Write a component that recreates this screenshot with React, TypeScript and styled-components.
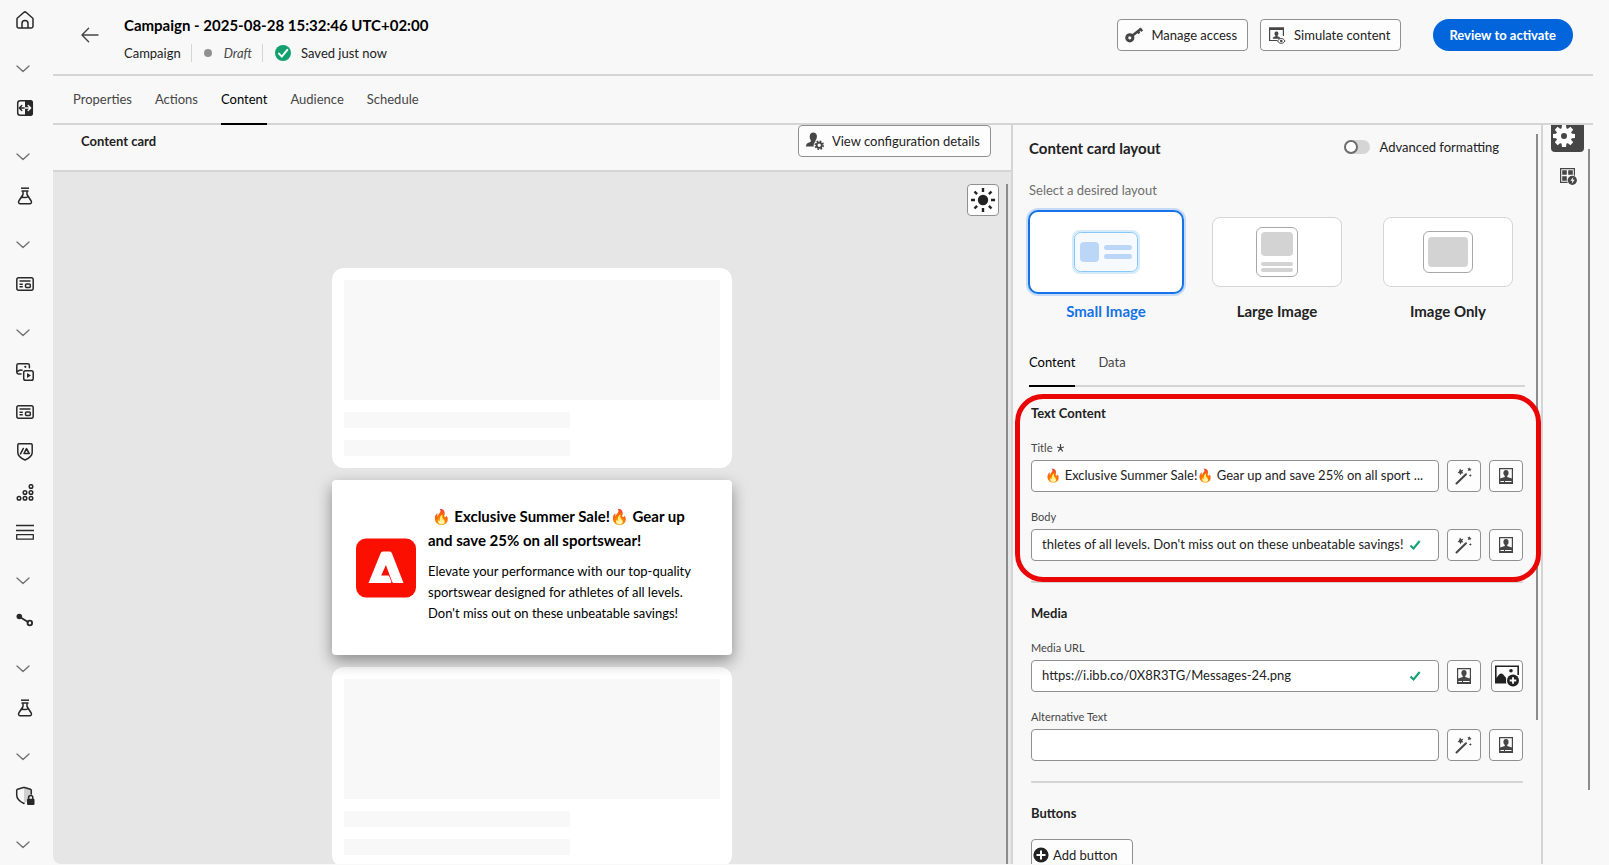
import React from 'react';
import styled, { createGlobalStyle, css } from 'styled-components';

const GlobalStyle = createGlobalStyle`
  *, *::before, *::after { box-sizing: border-box; }
  body { margin: 0; background: #f8f8f8; }
  body, button, input { font-family: Lato, "Noto Sans", sans-serif; font-size: 13px; color: #222222; }
  h1, h2, h3, p { margin: 0; }
  svg { display: block; flex: none; }
`;

const Shell = styled.div`
  display: flex;
  height: 100vh;
  min-height: 600px;
  padding-bottom: 1px;
  overflow: hidden;
`;

/* ---------- left navigation ---------- */

const SideNav = styled.nav`
  flex: none;
  width: 53px;
  display: flex;
  flex-direction: column;
  align-items: flex-start;
`;

const NavLink = styled.a`
  flex: none;
  display: flex;
  align-items: center;
  justify-content: center;
  width: 50px;
  height: 40px;
  color: #292929;
`;

const NavToggle = styled.button`
  flex: none;
  display: flex;
  align-items: center;
  justify-content: center;
  width: 46px;
  height: 48px;
  padding: 10px 0 0;
  border: 0;
  background: none;
  color: #6e6e6e;
`;

/* ---------- page frame ---------- */

const Main = styled.main`
  flex: 1;
  min-width: 0;
  display: flex;
  flex-direction: column;
  margin-right: 16px;
`;

const Header = styled.header`
  flex: none;
  display: flex;
  align-items: center;
  height: 76px;
  padding: 0 20px 4px 28px;
  border-bottom: 2px solid #d5d5d5;
`;

const BackButton = styled.button`
  display: flex;
  padding: 0;
  border: 0;
  background: none;
  color: #464646;
`;

const Heading = styled.div`
  flex: 1;
  margin-left: 25px;
  padding-top: 7px;
`;

const PageTitle = styled.h1`
  font-size: 15px;
  line-height: 20px;
  color: #000000;
`;

const StatusRow = styled.div`
  display: flex;
  align-items: center;
  height: 18px;
  margin-top: 9px;
`;

const StatusPart = styled.span`
  display: flex;
  align-items: center;
  gap: 10px;
  height: 18px;

  & + & {
    margin-left: 10px;
    padding-left: 12px;
    border-left: 1px solid #d5d5d5;
  }
`;

const StatusDot = styled.span`
  width: 8px;
  height: 8px;
  margin-right: 2px;
  border-radius: 50%;
  background: #909090;
`;

const DraftText = styled.em`
  color: #464646;
`;

const OutlineButton = styled.button<{ $tight?: boolean }>`
  display: flex;
  align-items: center;
  gap: ${(p) => (p.$tight ? 4 : 8)}px;
  height: 32px;
  padding: ${(p) => (p.$tight ? '0 14px 0 1px' : '0 10px 0 7px')};
  border: 1px solid #909090;
  border-radius: 4px;
  background: #fdfdfd;
  white-space: nowrap;
`;

const HeaderActions = styled.div`
  display: flex;
  gap: 12px;
`;

const PrimaryButton = styled.button`
  height: 32px;
  margin-left: 20px;
  padding: 0 17px 0 16px;
  border: 0;
  border-radius: 16px;
  background: #0265dc;
  color: #ffffff;
  font-weight: 700;
`;

const TabBar = styled.div<{ $inner?: boolean }>`
  flex: none;
  display: flex;
  gap: 23px;
  height: ${(p) => (p.$inner ? 51 : 49)}px;
  padding: ${(p) => (p.$inner ? '0' : '0 20px')};
  border-bottom: 2px solid #d5d5d5;
`;

const Tab = styled.button<{ $active?: boolean; $inner?: boolean }>`
  height: 100%;
  padding: ${(p) => (p.$inner ? '2px 0 0' : '0 0 2px')};
  border: 0;
  background: none;
  color: #464646;
  ${(p) =>
    p.$active &&
    css`
      color: #000000;
      box-shadow: 0 2px 0 #000000;
    `}
`;

const Workspace = styled.div`
  flex: 1;
  min-height: 0;
  display: flex;
`;

/* ---------- preview ---------- */

const Preview = styled.section`
  flex: 1;
  min-width: 0;
  display: flex;
  flex-direction: column;
  border-right: 2px solid #d5d5d5;
`;

const PreviewHeader = styled.div`
  flex: none;
  display: flex;
  align-items: flex-start;
  justify-content: space-between;
  height: 47px;
  padding: 0 20px 0 28px;
  border-bottom: 2px solid #d5d5d5;
`;

const PreviewTitle = styled.h2`
  font-size: 13px;
  line-height: 32px;
`;

const Canvas = styled.div`
  flex: 1;
  min-height: 0;
  position: relative;
  overflow: hidden;
  padding-top: 96px;
  background: #e6e6e6;
  border-bottom-left-radius: 8px;
`;

const ThemeButton = styled.button`
  position: absolute;
  top: 12px;
  right: 12px;
  display: flex;
  align-items: center;
  justify-content: center;
  width: 32px;
  height: 32px;
  padding: 0;
  border: 1px solid #909090;
  border-radius: 4px;
  background: #fdfdfd;
`;

const ScrollThumb = styled.div<{ $top: number; $right: number; $bottom: number }>`
  position: absolute;
  top: ${(p) => p.$top}px;
  right: ${(p) => p.$right}px;
  bottom: ${(p) => p.$bottom}px;
  width: 2px;
  background: #8c8c8c;
`;

const CardStack = styled.div`
  display: flex;
  flex-direction: column;
  gap: 12px;
  width: 400px;
  margin: 0 auto;
`;

const SkeletonCard = styled.div`
  display: flex;
  flex-direction: column;
  gap: 12px;
  padding: 12px;
  border-radius: 12px;
  background: #ffffff;
`;

const SkeletonImage = styled.div`
  height: 120px;
  background: #f8f8f8;
`;

const SkeletonLine = styled.div`
  width: 60%;
  height: 16px;
  background: #f8f8f8;
`;

const LiveCard = styled.article`
  position: relative;
  display: flex;
  align-items: center;
  gap: 12px;
  padding: 24px;
  border-radius: 4px;
  background: #ffffff;
  box-shadow: 0 6px 16px rgba(0, 0, 0, 0.4);
  color: #000000;
`;

const LiveTitle = styled.h3`
  padding-bottom: 9px;
  font-size: 15px;
  line-height: 24px;
`;

const LiveBody = styled.p`
  padding-bottom: 7px;
  line-height: 21px;
`;

/* ---------- settings panel ---------- */

const Panel = styled.aside`
  flex: none;
  position: relative;
  width: 530px;
  overflow: hidden;
  padding: 0 16px;
  border-right: 2px solid #d5d5d5;
`;

const PanelHeader = styled.div`
  display: flex;
  align-items: center;
  justify-content: space-between;
  height: 48px;
  padding: 0 26px 2px 0;
`;

const PanelTitle = styled.h2`
  font-size: 15px;
  line-height: 20px;
`;

const SwitchLabel = styled.label`
  display: flex;
  align-items: center;
  gap: 10px;
  padding-bottom: 2px;
`;

const Switch = styled.input`
  appearance: none;
  display: flex;
  width: 26px;
  height: 14px;
  margin: 0;
  border-radius: 7px;
  background: #d5d5d5;

  &::before {
    content: '';
    width: 14px;
    height: 14px;
    border: 2px solid #6e6e6e;
    border-radius: 50%;
    background: #ffffff;
  }
`;

const Hint = styled.p`
  line-height: 34px;
  color: #6e6e6e;
`;

const LayoutGrid = styled.div`
  display: flex;
  justify-content: space-between;
  height: 129px;
  margin: 0 -1px;
`;

const LayoutOption = styled.label<{ $selected?: boolean }>`
  display: flex;
  flex-direction: column;
  align-items: center;
  width: 156px;
  font-size: 15px;
  line-height: 20px;
  font-weight: 700;
  color: ${(p) => (p.$selected ? '#1473e6' : '#222222')};
`;

const HiddenRadio = styled.input`
  position: absolute;
  opacity: 0;
  width: 1px;
  height: 1px;
  margin: 0;
`;

const LayoutFrame = styled.span`
  display: flex;
  align-items: center;
  justify-content: center;
  width: 156px;
  height: 84px;
  margin: 3px 0 7px;
`;

const LayoutTile = styled.span<{ $selected?: boolean }>`
  display: flex;
  align-items: center;
  justify-content: center;
  width: 130px;
  height: 70px;
  border: 1px solid #d5d5d5;
  border-radius: 8px;
  background: #ffffff;
  ${(p) =>
    p.$selected &&
    css`
      width: 156px;
      height: 84px;
      border: 2px solid #1473e6;
      border-radius: 10px;
      box-shadow: 0 0 0 2px #c6dbf7;
    `}
`;

const FieldSection = styled.section<{ $first?: boolean }>`
  position: relative;
  margin: 0 2px;
  padding: ${(p) => (p.$first ? 16 : 20)}px 0 20px;
  border-bottom: 2px solid #d5d5d5;
  border-radius: 1px;
`;

const FieldHeading = styled.h3`
  margin-bottom: 16px;
  font-size: 13px;
  line-height: 20px;
`;

const Field = styled.div`
  & + & {
    margin-top: 16px;
  }
`;

const FieldLabel = styled.label`
  display: flex;
  align-items: center;
  gap: 5px;
  height: 17px;
  margin-bottom: 4px;
  font-size: 11px;
  color: #464646;
`;

const FieldRow = styled.div`
  display: flex;
  justify-content: space-between;
  gap: 8px;
`;

const InputBox = styled.div<{ $valid?: boolean }>`
  flex: 1;
  min-width: 0;
  display: flex;
  align-items: center;
  height: 32px;
  padding: 0 ${(p) => (p.$valid ? 17 : 10)}px 0 10px;
  border: 1px solid #909090;
  border-radius: 4px;
  background: #ffffff;
`;

const TextInput = styled.input`
  flex: 1;
  min-width: 0;
  height: 100%;
  padding: 0 0 2px;
  border: 0;
  outline: 0;
  background: none;
`;

const IconButton = styled.button<{ $narrow?: boolean }>`
  flex: none;
  display: flex;
  align-items: center;
  justify-content: center;
  width: ${(p) => (p.$narrow ? 32 : 34)}px;
  height: 32px;
  margin-left: ${(p) => (p.$narrow ? 2 : 0)}px;
  padding: 0;
  border: 1px solid #909090;
  border-radius: 4px;
  background: #fdfdfd;
`;

const Highlight = styled.div`
  position: absolute;
  z-index: 2;
  top: 7px;
  right: -18px;
  bottom: -1px;
  left: -16px;
  border: 5px solid #eb0606;
  border-radius: 28px;
  pointer-events: none;
`;

/* ---------- right rail ---------- */

const Rail = styled.div`
  flex: none;
  position: relative;
  width: 50px;
  display: flex;
  flex-direction: column;
  align-items: flex-start;
  padding-left: 8px;
`;

const RailButton = styled.button<{ $active?: boolean }>`
  display: flex;
  align-items: center;
  justify-content: center;
  width: 33px;
  height: ${(p) => (p.$active ? 27 : 48)}px;
  padding: 0 0 0 2px;
  border: 0;
  border-radius: 0 0 4px 4px;
  background: ${(p) => (p.$active ? '#464646' : 'none')};
  ${(p) =>
    p.$active &&
    css`
      align-items: flex-start;
      padding: 0 7px 0 0;
    `}
`;

/* ---------- icons ---------- */

const line = { fill: 'none', stroke: 'currentColor', strokeWidth: 1.5, strokeLinecap: 'round', strokeLinejoin: 'round' } as const;

const ChevronIcon = () => (
  <svg width="14" height="8" viewBox="0 0 14 8"><path d="M1 1l6 5.6L13 1" {...line} strokeWidth={1.3} /></svg>
);
const HomeIcon = () => (
  <svg width="18" height="18" viewBox="0 0 18 18">
    <path d="M1.2 7.3L8 1.3c.6-.5 1.400-.5 2 0l6.800 6c.2.2.2.4.2.7v7.200c0 1-.7 1.700-1.700 1.700H12v-4.300a3 3 0 0 0-6 0v4.300H2.700c-1 0-1.700-.7-1.700-1.700V8c0-.3 0-.5.2-.7zM6 16.900h6" {...line} />
  </svg>
);
const SwitchPanelIcon = () => (
  <svg width="18" height="18" viewBox="0 0 18 18">
    <rect x="1.700" y="1.700" width="14.600" height="14.600" rx="2.500" {...line} />
    <path d="M9 1h5a3 3 0 0 1 3 3v10a3 3 0 0 1-3 3H9z" fill="currentColor" />
    <path d="M9 9H3.500M5.800 6.500L3.300 9l2.500 2.500" {...line} strokeWidth={1.4} />
    <path d="M9 9h5.500M12.200 6.500L14.700 9l-2.500 2.500" {...line} stroke="#f8f8f8" strokeWidth={1.4} />
  </svg>
);
const FlaskIcon = () => (
  <svg width="16" height="18" viewBox="0 0 16 18">
    <path d="M4 1.200h8" {...line} strokeLinecap="butt" />
    <path d="M5 4h6M6 4v3.500L1.800 14c-.7 1.300 0 2.800 1.500 2.800h9.400c1.500 0 2.200-1.500 1.500-2.800L10 7.500V4M4.200 10.800c2.500-1.500 3.800 1.200 6.800-1.300" {...line} />
  </svg>
);
const BrowserIcon = () => (
  <svg width="18" height="14" viewBox="0 0 18 14">
    <rect x=".8" y=".8" width="16.400" height="12.400" rx="2" {...line} />
    <path d="M3.500 4h11M3.500 7.300h3.300M3.500 9.800h3.300" {...line} strokeLinecap="butt" strokeWidth={1.4} />
    <rect x="9.500" y="7" width="4.800" height="3.400" rx="1" {...line} />
  </svg>
);
const MediaPlayIcon = () => (
  <svg width="18" height="18" viewBox="0 0 18 18">
    <path d="M5 11H2.500C1.500 11 .8 10.300.8 9.300V2.500C.8 1.500 1.500.8 2.500.8h9.200c1 0 1.700.7 1.700 1.700v2.300M1 9c1.500-1.500 3-2.500 5-1.800" {...line} />
    <circle cx="9.300" cy="3.800" r="1.100" fill="currentColor" />
    <rect x="7.700" y="7.700" width="9.500" height="9.500" rx="1.800" {...line} />
    <path d="M11 10v5l4-2.500z" fill="currentColor" />
  </svg>
);
const ShieldPeakIcon = () => (
  <svg width="16" height="18" viewBox="0 0 16 18">
    <path d="M2 .8h12c.7 0 1.200.5 1.200 1.200v7.500c0 3.500-2.700 5.500-7.200 7.500C3.500 15 .8 13 .8 9.500V2C.8 1.300 1.300.8 2 .8z" {...line} />
    <path d="M3.500 10.800l2.800-5.300M7 10.500l2.500-4.800 2.700 4.800z" {...line} strokeWidth={1.6} />
  </svg>
);
const DotsIcon = () => (
  <svg width="18" height="17" viewBox="0 0 18 17">
    {[[15, 2.5], [9, 8.5], [15, 8.5], [3, 14.3], [9, 14.3], [15, 14.3]].map(([x, y]) => (
      <circle key={`${x}-${y}`} cx={x} cy={y} r="1.800" {...line} />
    ))}
  </svg>
);
const RowsIcon = () => (
  <svg width="18" height="16" viewBox="0 0 18 16">
    <path d="M0 1.500h18M0 6.500h18" {...line} strokeLinecap="butt" />
    <rect x=".7" y="10.700" width="16.600" height="4.500" {...line} strokeWidth={1.3} />
  </svg>
);
const NodesIcon = () => (
  <svg width="18" height="14" viewBox="0 0 18 14">
    <path d="M3 3.500l9 5.500" {...line} strokeWidth={1.8} />
    <circle cx="3.300" cy="3.500" r="2.800" fill="currentColor" />
    <circle cx="13.800" cy="10" r="2.300" {...line} strokeWidth={1.8} />
  </svg>
);
const ShieldLockIcon = () => (
  <svg width="20" height="20" viewBox="0 0 20 20">
    <path d="M9 1.500L16 3.800v5c0 3.500-2.500 6.500-7 8.500z" fill="#d0d0d0" />
    <path d="M16.300 8V4.500c0-.6-.3-1-.9-1.200L9.600 1.500a2 2 0 0 0-1.200 0L2.600 3.300c-.6.2-.9.600-.9 1.200V9c0 3.700 2.900 6.500 7.300 8.500" {...line} />
    <rect x="12" y="12.800" width="7.500" height="6.200" rx="1" fill="currentColor" />
    <path d="M13.600 13v-1.500a2.100 2.100 0 0 1 4.200 0V13" {...line} />
  </svg>
);
const BackIcon = () => (
  <svg width="18" height="16" viewBox="0 0 18 16"><path d="M17 8H1.200M7.600 1.300L1 8l6.600 6.700" {...line} strokeWidth={1.4} /></svg>
);
const SavedIcon = () => (
  <svg width="16" height="16" viewBox="0 0 16 16">
    <circle cx="8" cy="8" r="8" fill="#12a06e" />
    <path d="M4 8.600l2.800 3L12.300 4.800" fill="none" stroke="#fff" strokeWidth="2" strokeLinecap="round" />
  </svg>
);
const KeyIcon = () => (
  <svg width="18" height="16" viewBox="0 0 18 16" fill="none" stroke="#464646">
    <circle cx="4.800" cy="10.800" r="3.100" strokeWidth="3" />
    <path d="M7.500 8.500L15.500 2.200" strokeWidth="2.600" />
    <path d="M12.300 3.800l2 2.600M14.800 1.200l2.400 3" strokeWidth="2.400" />
  </svg>
);
const PersonPath = 'M0 10c0-1.800 1-2.200 2.800-2.800.6-.2.6-.8.2-1.400C1.500 3.800 2 .8 4.600.8s3.100 3 1.600 5c-.4.600-.4 1.200.2 1.400 1.800.6 2.800 1 2.800 2.800z';
const SimulateIcon = () => (
  <svg width="18" height="17" viewBox="0 0 18 17">
    <path d="M9 13.500H1.600V1h13.800v8" fill="none" stroke="#464646" strokeWidth="1.200" />
    <path d="M1 .5h15V3H1z" fill="#464646" />
    <path d={PersonPath} transform="translate(4.800 3.800) scale(.8)" fill="#464646" />
    <path d="M9.500 14c2-3.400 5.500-3.400 7.500 0-2 3.200-5.500 3.200-7.500 0z" fill="#f8f8f8" stroke="#464646" />
    <circle cx="13.300" cy="14" r="1.300" fill="#464646" />
  </svg>
);
const UserGearIcon = () => (
  <svg width="18" height="18" viewBox="0 0 18 18">
    <path d="M0 14.500c0-3 1.800-3.600 4.300-4.600.8-.3.900-1 .3-1.900C2.900 5 3.600.5 7.300.5s4.500 4.200 2.800 7c-.6 1-1 1.600-.7 2.300-1.700 1-2 3-1.600 4.700z" fill="#464646" />
    <circle cx="13.200" cy="13.200" r="2.600" fill="none" stroke="#464646" strokeWidth="1.800" />
    <circle cx="13.200" cy="13.200" r="4" fill="none" stroke="#464646" strokeWidth="1.600" strokeDasharray="1.700 1.440" />
  </svg>
);
const SunIcon = () => (
  <svg width="24" height="24" viewBox="0 0 24 24">
    <circle cx="12" cy="12" r="5.200" fill="#222" />
    <path d="M12 0v4M12 20v4M0 12h4M20 12h4M3.500 3.500l2.600 2.600M17.900 17.900l2.600 2.600M3.500 20.500l2.600-2.600M17.900 6.100l2.600-2.600" stroke="#222" strokeWidth="2.400" />
  </svg>
);
const WandIcon = () => (
  <svg width="18" height="18" viewBox="0 0 18 18" fill="#464646">
    <path d="M1.500 16.500L11 7.300" stroke="#464646" strokeWidth="2" strokeLinecap="round" />
    <path d="M5 1.500l1.200 1.700 2.200-.5-1.200 2L8.400 6.300l-2.100.1-.9 1.800-.9-2-2-.3 1.500-1.400zM14.500.3l.6 1.400 1.600.3-1.300.9.200 1.600-1.300-1-1.500.5.5-1.500-.9-1.300 1.600.1zM15.300 7l.5 1 1.100.5-1.100.5-.5 1-.5-1-1.100-.5 1.100-.5z" />
  </svg>
);
const StampIcon = () => (
  <svg width="14" height="16" viewBox="0 0 14 16">
    <path d="M.600.600h12.800v14.800H.6z" fill="none" stroke="#464646" strokeWidth="1.200" />
    <ellipse cx="7" cy="5" rx="2.600" ry="3" fill="#464646" />
    <path d="M5.800 6h2.400v3l4.800 1.500V16H1v-5.500L5.800 9z" fill="#464646" />
    <path d="M1.500 13.500h3.500M6 13.500h6.500" stroke="#fff" strokeWidth="1" />
  </svg>
);
const ImageAddIcon = () => (
  <svg width="24" height="22" viewBox="0 0 24 22">
    <path d="M.8 18V1.300h22.400V10" fill="none" stroke="#222" strokeWidth="1.600" />
    <path d="M0 18.500v-4l4.200-5c1.400-1.300 2.700-1.300 4 0l3 3.500v5.500z" fill="#222" />
    <circle cx="16" cy="5.700" r="1.800" fill="#222" />
    <circle cx="18" cy="15.500" r="6.800" fill="#fdfdfd" />
    <circle cx="18" cy="15.500" r="6" fill="#222" />
    <path d="M18 12.200v6.600M14.700 15.500h6.600" stroke="#fff" strokeWidth="1.800" />
  </svg>
);
const CheckIcon = () => (
  <svg width="12" height="10" viewBox="0 0 12 10"><path d="M1.500 5.500l3 3L10.700 1" fill="none" stroke="#12a06e" strokeWidth="2" /></svg>
);
const PlusCircleIcon = () => (
  <svg width="16" height="16" viewBox="0 0 16 16">
    <circle cx="8" cy="8" r="7.600" fill="#222" />
    <path d="M8 3.500v9M3.500 8h9" stroke="#fff" strokeWidth="2" />
  </svg>
);
const AsteriskIcon = () => (
  <svg width="7" height="8" viewBox="0 0 7 8"><path d="M3.500 0v4M0 3l3.500 1L7 3M1.300 7.500L3.500 4l2.200 3.500" fill="none" stroke="#464646" strokeWidth="1.200" /></svg>
);
const GearIcon = () => (
  <svg width="22" height="22" viewBox="0 0 22 22">
    <circle cx="11" cy="11" r="5.500" fill="none" stroke="#fff" strokeWidth="5" />
    {[0, 45, 90, 135, 180, 225, 270, 315].map((a) => (
      <path key={a} d="M9 0h4l.6 5H8.400z" fill="#fff" transform={`rotate(${a} 11 11)`} />
    ))}
  </svg>
);
const GridBoltIcon = () => (
  <svg width="17" height="17" viewBox="0 0 17 17">
    <path d="M.600.600h13.800v13.800H.6z" fill="#f8f8f8" stroke="#464646" strokeWidth="1.200" />
    <path d="M2.200 2.200h4.600v4.600H2.200zM8.200 2.200h4.600v4.600H8.200zM2.200 8.200h4.600v4.600H2.200z" fill="#464646" />
    <circle cx="12.300" cy="12.300" r="5.300" fill="#f8f8f8" />
    <circle cx="12.300" cy="12.300" r="4.600" fill="#464646" />
    <path d="M13.400 9l-3 3.700h2l-.7 3 3-3.900h-2z" fill="#fff" />
  </svg>
);
const BrandTile = () => (
  <svg width="60" height="60" viewBox="0 0 60 60">
    <rect y=".5" width="60" height="59" rx="10" fill="#fa0f00" />
    <path d="M24.500 15.500c.5-1.300 1.200-2 2.600-2h6.400c1.300 0 2 .7 2.500 2L47.500 45H38c-1 0-1.500-.4-1.900-1.300L29.900 27l-4.700 10.500h6.300c1 0 1.500.4 1.900 1.300l1.800 4.400c.4 1-.1 1.800-1.100 1.800H12.500z" fill="#fff" />
  </svg>
);
const SmallLayoutArt = () => (
  <svg width="68" height="44" viewBox="0 0 68 44">
    <rect x="1" y="1" width="66" height="42" rx="7" fill="none" stroke="#d3ebfb" strokeWidth="2" />
    <rect x="2.500" y="2.500" width="63" height="39" rx="6" fill="#f6faff" stroke="#8ac7f7" />
    <rect x="8" y="12" width="19" height="20" rx="4" fill="#bcd6f8" />
    <rect x="32" y="15" width="28" height="5" rx="2.500" fill="#bcd6f8" />
    <rect x="32" y="24" width="28" height="5" rx="2.500" fill="#bcd6f8" />
  </svg>
);
const LargeLayoutArt = () => (
  <svg width="42" height="50" viewBox="0 0 42 50">
    <rect x=".5" y=".5" width="41" height="49" rx="5.500" fill="#fff" stroke="#a8a8a8" />
    <rect x="5" y="5" width="32" height="24" rx="4" fill="#d3d3d3" />
    <rect x="5" y="35" width="32" height="4" rx="2" fill="#d3d3d3" />
    <rect x="5" y="41" width="32" height="4" rx="2" fill="#d3d3d3" />
  </svg>
);
const ImageLayoutArt = () => (
  <svg width="50" height="42" viewBox="0 0 50 42">
    <rect x=".5" y=".5" width="49" height="41" rx="5.500" fill="#fff" stroke="#a8a8a8" />
    <rect x="5" y="6" width="40" height="30" rx="4" fill="#d3d3d3" />
  </svg>
);

/* ---------- data ---------- */

type NavItem = { name: string; icon?: () => React.JSX.Element };
const navItems: NavItem[] = [
  { name: 'Home', icon: HomeIcon },
  { name: 'Expand workspace' },
  { name: 'Workspace', icon: SwitchPanelIcon },
  { name: 'Expand experiments' },
  { name: 'Experiments', icon: FlaskIcon },
  { name: 'Expand pages' },
  { name: 'Pages', icon: BrowserIcon },
  { name: 'Expand content' },
  { name: 'Assets', icon: MediaPlayIcon },
  { name: 'Landing pages', icon: BrowserIcon },
  { name: 'Brands', icon: ShieldPeakIcon },
  { name: 'Segments', icon: DotsIcon },
  { name: 'Templates', icon: RowsIcon },
  { name: 'Expand journeys' },
  { name: 'Journeys', icon: NodesIcon },
  { name: 'Expand tests' },
  { name: 'Tests', icon: FlaskIcon },
  { name: 'Expand privacy' },
  { name: 'Privacy', icon: ShieldLockIcon },
  { name: 'Expand more' },
];

const layouts = [
  { name: 'Small Image', Art: SmallLayoutArt, selected: true },
  { name: 'Large Image', Art: LargeLayoutArt, selected: false },
  { name: 'Image Only', Art: ImageLayoutArt, selected: false },
];

type FieldProps = {
  id: string;
  label: string;
  value: string;
  required?: boolean;
  valid?: boolean;
  media?: boolean;
};

function TextField({ id, label, value, required, valid, media }: FieldProps) {
  return (
    <Field>
      <FieldLabel htmlFor={id}>
        {label}
        {required && <AsteriskIcon />}
      </FieldLabel>
      <FieldRow>
        <InputBox $valid={valid}>
          <TextInput id={id} type="text" defaultValue={value} />
          {valid && <CheckIcon />}
        </InputBox>
        {!media && <IconButton aria-label={`Generate ${label}`}><WandIcon /></IconButton>}
        <IconButton aria-label={`Personalize ${label}`}><StampIcon /></IconButton>
        {media && <IconButton $narrow aria-label="Add image"><ImageAddIcon /></IconButton>}
      </FieldRow>
    </Field>
  );
}

function Skeleton() {
  return (
    <SkeletonCard>
      <SkeletonImage />
      <SkeletonLine />
      <SkeletonLine />
    </SkeletonCard>
  );
}

export default function App() {
  return (
    <Shell>
      <GlobalStyle />
      <SideNav>
        {navItems.map(({ name, icon: Icon }) =>
          Icon ? (
            <NavLink key={name} href="#" aria-label={name}><Icon /></NavLink>
          ) : (
            <NavToggle key={name} aria-label={name}><ChevronIcon /></NavToggle>
          ),
        )}
      </SideNav>
      <Main>
        <Header>
          <BackButton aria-label="Back"><BackIcon /></BackButton>
          <Heading>
            <PageTitle>Campaign - 2025-08-28 15:32:46 UTC+02:00</PageTitle>
            <StatusRow>
              <StatusPart>Campaign</StatusPart>
              <StatusPart><StatusDot /><DraftText>Draft</DraftText></StatusPart>
              <StatusPart><SavedIcon />Saved just now</StatusPart>
            </StatusRow>
          </Heading>
          <HeaderActions>
            <OutlineButton><KeyIcon />Manage access</OutlineButton>
            <OutlineButton><SimulateIcon />Simulate content</OutlineButton>
            <PrimaryButton>Review to activate</PrimaryButton>
          </HeaderActions>
        </Header>
        <TabBar role="tablist">
          {['Properties', 'Actions', 'Content', 'Audience', 'Schedule'].map((t) => (
            <Tab key={t} role="tab" $active={t === 'Content'}>{t}</Tab>
          ))}
        </TabBar>
        <Workspace>
          <Preview>
            <PreviewHeader>
              <PreviewTitle>Content card</PreviewTitle>
              <OutlineButton><UserGearIcon />View configuration details</OutlineButton>
            </PreviewHeader>
            <Canvas>
              <ThemeButton aria-label="Light theme"><SunIcon /></ThemeButton>
              <CardStack>
                <Skeleton />
                <LiveCard>
                  <BrandTile />
                  <div>
                    <LiveTitle>&nbsp;🔥 Exclusive Summer Sale!🔥 Gear up and save 25% on all sportswear!</LiveTitle>
                    <LiveBody>
                      Elevate your performance with our top-quality sportswear designed for athletes of all
                      levels. Don't miss out on these unbeatable savings!
                    </LiveBody>
                  </div>
                </LiveCard>
                <Skeleton />
              </CardStack>
              <ScrollThumb $top={12} $right={3} $bottom={0} />
            </Canvas>
          </Preview>
          <Panel>
            <PanelHeader>
              <PanelTitle>Content card layout</PanelTitle>
              <SwitchLabel><Switch type="checkbox" role="switch" />Advanced formatting</SwitchLabel>
            </PanelHeader>
            <Hint>Select a desired layout</Hint>
            <LayoutGrid role="radiogroup" aria-label="Layout">
              {layouts.map(({ name, Art, selected }) => (
                <LayoutOption key={name} $selected={selected}>
                  <HiddenRadio type="radio" name="layout" defaultChecked={selected} />
                  <LayoutFrame>
                    <LayoutTile $selected={selected}><Art /></LayoutTile>
                  </LayoutFrame>
                  {name}
                </LayoutOption>
              ))}
            </LayoutGrid>
            <TabBar $inner role="tablist">
              <Tab role="tab" $inner $active>Content</Tab>
              <Tab role="tab" $inner>Data</Tab>
            </TabBar>
            <FieldSection $first>
              <FieldHeading>Text Content</FieldHeading>
              <TextField
                id="title"
                label="Title"
                required
                value={'\u00a0🔥 Exclusive Summer Sale!🔥 Gear up and save 25% on all sport ...'}
              />
              <TextField
                id="body"
                label="Body"
                valid
                value="thletes of all levels. Don't miss out on these unbeatable savings!"
              />
              <Highlight />
            </FieldSection>
            <FieldSection>
              <FieldHeading>Media</FieldHeading>
              <TextField id="media-url" label="Media URL" valid media value="https://i.ibb.co/0X8R3TG/Messages-24.png" />
              <TextField id="alt-text" label="Alternative Text" value="" />
            </FieldSection>
            <FieldSection>
              <FieldHeading>Buttons</FieldHeading>
              <OutlineButton $tight><PlusCircleIcon />Add button</OutlineButton>
            </FieldSection>
            <ScrollThumb $top={9} $right={3} $bottom={144} />
          </Panel>
          <Rail>
            <RailButton $active aria-label="Settings"><GearIcon /></RailButton>
            <RailButton aria-label="Components"><GridBoltIcon /></RailButton>
            <ScrollThumb $top={24} $right={3} $bottom={74} />
          </Rail>
        </Workspace>
      </Main>
    </Shell>
  );
}
